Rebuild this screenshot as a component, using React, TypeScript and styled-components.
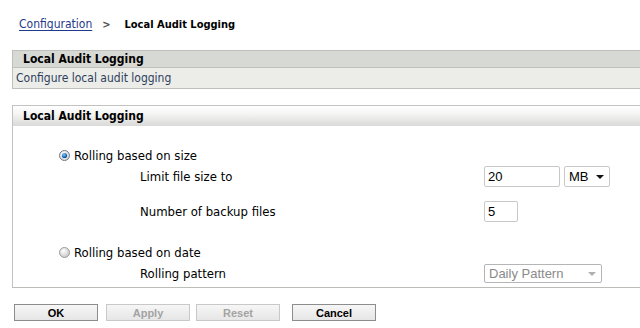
import React from "react";
import styled, { createGlobalStyle } from "styled-components";

const GlobalStyle = createGlobalStyle`
  html, body {
    margin: 0;
    padding: 0;
    background: #fff;
    overflow: hidden;
  }
  body {
    font-family: "DejaVu Sans Condensed", "DejaVu Sans", sans-serif;
    font-size: 12px;
    color: #000;
  }
`;

const Page = styled.div`
  width: 640px;
  height: 328px;
  padding-left: 12px;
  box-sizing: border-box;
`;

const Breadcrumb = styled.div`
  display: flex;
  align-items: center;
  gap: 10px;
  height: 16px;
  padding: 16px 0 0 7px;
  margin-bottom: 18px;
  font-size: 12px;
`;

const CrumbLink = styled.a`
  color: #1f3a8a;
  text-decoration: underline;
  text-underline-offset: 2px;
  cursor: pointer;
`;

const Chevron = styled.span`
  color: #555;
  font-weight: bold;
  font-size: 11px;
  margin: 0 4px 0 0;
`;

const CrumbCurrent = styled.span`
  font-weight: bold;
  font-size: 11px;
`;

const InfoBox = styled.div`
  border-top: 1px solid #bfbfbb;
  border-bottom: 1px solid #bfbfbb;
  border-left: 1px solid #bfbfbb;
  margin-bottom: 16px;
`;

const InfoTitle = styled.div`
  height: 16px;
  line-height: 16px;
  background: #d7d9d4;
  border-bottom: 1px solid #bfbfbb;
  padding-left: 10px;
  font-weight: bold;
  font-size: 12px;
`;

const InfoText = styled.div`
  height: 20px;
  line-height: 20px;
  background: #ecece9;
  padding-left: 3px;
  color: #2d3f5c;
`;

const Panel = styled.div`
  border-top: 1px solid #c2c2c0;
  border-bottom: 1px solid #bcbcb8;
  border-left: 1px solid #c2c2c0;
`;

const PanelTitle = styled.div`
  height: 20px;
  line-height: 20px;
  background: linear-gradient(#ffffff, #f4f4f3 40%, #d9dad7);
  padding-left: 10px;
  font-weight: bold;
  font-size: 12px;
`;

const PanelBody = styled.div`
  padding: 19px 0 4px 0;
  font-size: 13px;
`;

const RadioRow = styled.label<{ $top: number }>`
  display: flex;
  align-items: center;
  gap: 4px;
  height: 20px;
  margin-top: ${(p) => p.$top}px;
  padding-left: 46px;
`;

const FieldRow = styled.div<{ $top: number; $height: number }>`
  display: grid;
  grid-template-columns: 344px auto;
  align-items: center;
  height: ${(p) => p.$height}px;
  margin-top: ${(p) => p.$top}px;
  padding-left: 127px;
`;

const Controls = styled.div`
  display: flex;
  gap: 4px;
  align-items: center;
`;

const TextInput = styled.div<{ $width: number }>`
  box-sizing: border-box;
  width: ${(p) => p.$width}px;
  height: 21px;
  border: 1px solid #c9c9c9;
  border-radius: 2px;
  padding-left: 3px;
  font-family: "Liberation Sans", Arial, sans-serif;
  font-size: 13px;
  line-height: 19px;
  color: #000;
`;

const Select = styled.div<{ $width: number; $disabled?: boolean }>`
  box-sizing: border-box;
  width: ${(p) => p.$width}px;
  height: ${(p) => (p.$disabled ? 19 : 21)}px;
  border: 1px solid ${(p) => (p.$disabled ? "#b5b5b5" : "#c9c9c9")};
  border-radius: 2px;
  padding: 0 5px 0 4px;
  display: flex;
  align-items: center;
  justify-content: space-between;
  font-family: "Liberation Sans", Arial, sans-serif;
  font-size: 13px;
  color: ${(p) => (p.$disabled ? "#8a8a8a" : "#000")};
`;

const Caret = styled.span<{ $disabled?: boolean }>`
  width: 0;
  height: 0;
  border-left: 4px solid transparent;
  border-right: 4px solid transparent;
  border-top: 4px solid ${(p) => (p.$disabled ? "#b0b0b0" : "#111")};
`;

const ButtonBar = styled.div`
  display: flex;
  padding: 16px 0 0 2px;
`;

const Button = styled.button<{ $disabled?: boolean; $gap: number }>`
  box-sizing: border-box;
  width: 84px;
  height: 17px;
  margin-right: ${(p) => p.$gap}px;
  padding: 0;
  border: 1px solid ${(p) => (p.$disabled ? "#c8c8c8" : "#8d8d8d")};
  background: linear-gradient(#f6f6f6, #e6e6e6);
  font-family: "Liberation Sans", Arial, sans-serif;
  font-weight: bold;
  font-size: 11px;
  color: ${(p) => (p.$disabled ? "#a3a3a3" : "#000")};
`;

const Radio = ({ checked }: { checked: boolean }) => (
  <svg width="11" height="11" viewBox="0 0 11 11">
    <defs>
      <radialGradient id={checked ? "rOn" : "rOff"} cx="0.4" cy="0.35" r="0.7">
        <stop offset="0" stopColor="#ffffff" />
        <stop offset="1" stopColor={checked ? "#c9cfd6" : "#c4c4c4"} />
      </radialGradient>
      <radialGradient id="dot" cx="0.4" cy="0.35" r="0.6">
        <stop offset="0" stopColor="#7ad0ff" />
        <stop offset="1" stopColor="#0b4f98" />
      </radialGradient>
    </defs>
    <circle cx="5.5" cy="5.5" r="5" fill={`url(#${checked ? "rOn" : "rOff"})`} stroke={checked ? "#6f7a86" : "#9a9a9a"} />
    {checked && <circle cx="5.5" cy="5.5" r="2.6" fill="url(#dot)" />}
  </svg>
);

export default function App() {
  return (
    <Page>
      <GlobalStyle />
      <Breadcrumb>
        <CrumbLink>Configuration</CrumbLink>
        <Chevron>&gt;</Chevron>
        <CrumbCurrent>Local Audit Logging</CrumbCurrent>
      </Breadcrumb>

      <InfoBox>
        <InfoTitle>Local Audit Logging</InfoTitle>
        <InfoText>Configure local audit logging</InfoText>
      </InfoBox>

      <Panel>
        <PanelTitle>Local Audit Logging</PanelTitle>
        <PanelBody>
          <RadioRow $top={0}>
            <Radio checked />
            Rolling based on size
          </RadioRow>
          <FieldRow $top={1} $height={21}>
            <span>Limit file size to</span>
            <Controls>
              <TextInput $width={76}>20</TextInput>
              <Select $width={46}>
                MB <Caret />
              </Select>
            </Controls>
          </FieldRow>
          <FieldRow $top={14} $height={21}>
            <span>Number of backup files</span>
            <Controls>
              <TextInput $width={34}>5</TextInput>
            </Controls>
          </FieldRow>
          <RadioRow $top={20}>
            <Radio checked={false} />
            Rolling based on date
          </RadioRow>
          <FieldRow $top={2} $height={19}>
            <span>Rolling pattern</span>
            <Controls>
              <Select $width={118} $disabled>
                Daily Pattern <Caret $disabled />
              </Select>
            </Controls>
          </FieldRow>
        </PanelBody>
      </Panel>

      <ButtonBar>
        <Button $gap={8}>OK</Button>
        <Button $gap={6} $disabled>Apply</Button>
        <Button $gap={12} $disabled>Reset</Button>
        <Button $gap={0}>Cancel</Button>
      </ButtonBar>
    </Page>
  );
}
